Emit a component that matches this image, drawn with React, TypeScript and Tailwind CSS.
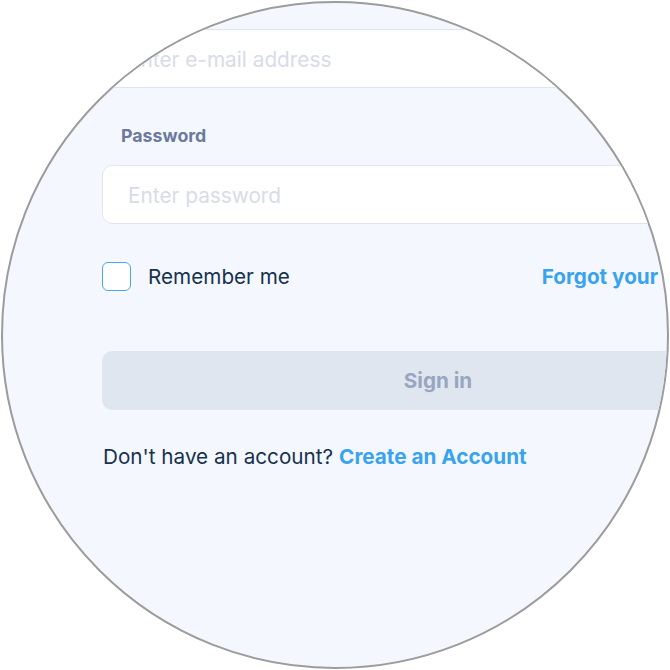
import React from 'react';

const App: React.FC = () => {
  return (
    <div className="w-[670px] h-[670px] bg-white relative" style={{ fontFamily: 'Inter, "Noto Sans", sans-serif' }}>
      {/* magnifier lens */}
      <div className="absolute left-[1px] top-[1px] w-[668px] h-[668px] rounded-full border-2 border-[#9c9c9c] overflow-hidden bg-[#f4f8fe]">
        <div className="flex flex-col w-[672px] ml-[99px] pt-[26px]">
          <div className="h-[59px] rounded-[10px] border border-[#dfe5ef] bg-white flex items-center px-[25px] pt-[2px]">
            <span className="text-[20.8px] text-[#d8dce6]">Enter e-mail address</span>
          </div>

          <div className="mt-[38px] pl-[19px] h-[20px] flex items-center text-[17.8px] font-bold text-[#6b7a9c]">
            Password
          </div>
          <div className="mt-[19px] h-[59px] rounded-[10px] border border-[#dfe5ef] bg-white flex items-center px-[25px] pt-[2px]">
            <span className="text-[20.8px] text-[#d8dce6]">Enter password</span>
          </div>

          <div className="mt-[38px] h-[29px] flex items-center">
            <div className="w-[29px] h-[29px] rounded-[6px] border-[1.5px] border-[#4aa8e8] bg-white" />
            <span className="ml-[17px] text-[20.7px] text-[#17324f]">Remember me</span>
            <span className="ml-auto text-[20.7px] font-bold text-[#3aa3ee]">Forgot your password?</span>
          </div>

          <div className="mt-[60px] h-[59px] rounded-[10px] bg-[#dfe6f0] flex items-center justify-center">
            <span className="text-[20.7px] font-bold text-[#98a6c0]">Sign in</span>
          </div>

          <div className="mt-[35px] h-[24px] flex items-center text-[20.7px] pl-[1px]">
            <span className="text-[#17324f]">Don't have an account?</span>
            <span className="ml-[6px] font-bold text-[#3aa3ee]">Create an Account</span>
          </div>
        </div>
      </div>
    </div>
  );
};

export default App;
